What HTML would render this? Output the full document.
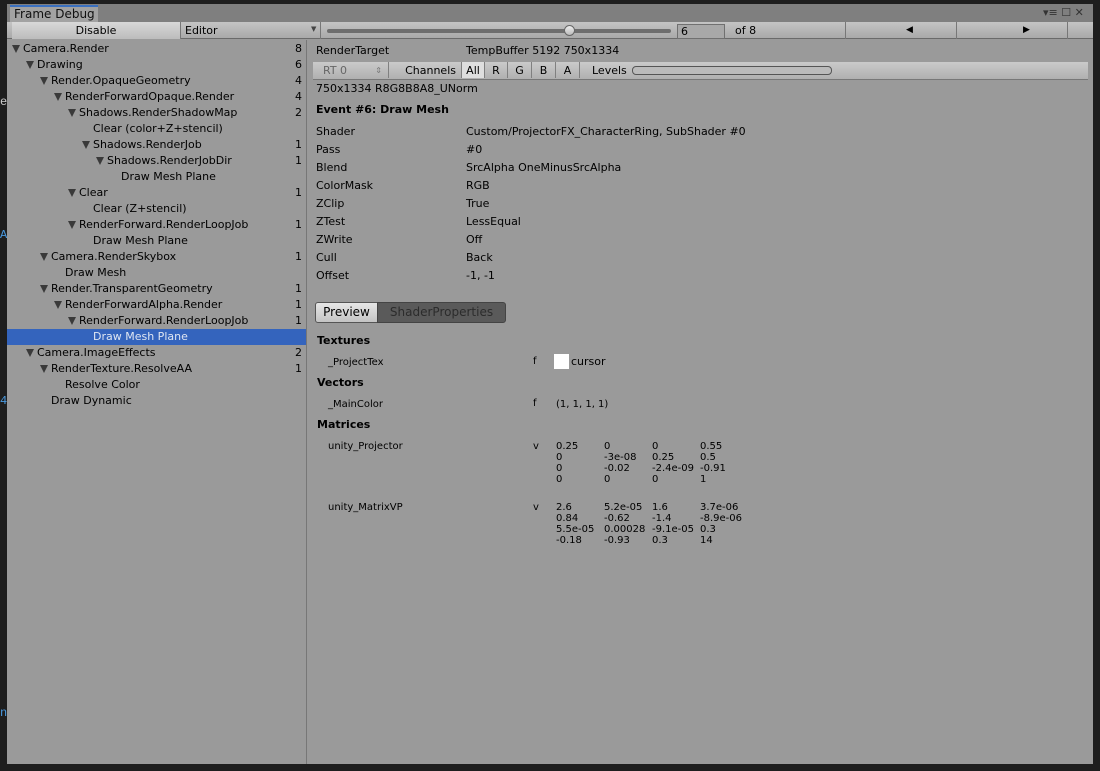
<!DOCTYPE html>
<html><head><meta charset="utf-8"><style>
*{margin:0;padding:0;box-sizing:border-box}
body{width:1100px;height:771px;background:#1e1e1e;position:relative;overflow:hidden;font-family:"DejaVu Sans","Liberation Sans",sans-serif;font-size:11px;color:#000}
.a{position:absolute;white-space:nowrap}
#win{position:absolute;left:7px;top:4px;width:1086px;height:760px;background:#9a9a9a}
.tri{position:absolute;width:0;height:0;border-left:4.5px solid transparent;border-right:4.5px solid transparent;border-top:8px solid #3a3a3a}
.row{position:absolute;left:0;width:299px;height:16px;line-height:16px}
.cnt{position:absolute;right:4px;top:0}
.btn{position:absolute;top:0;height:16px;line-height:17px;text-align:center;border-right:1px solid #808080}
.sm{font-size:10px}
</style></head><body>
<div class="a" style="left:0;top:95px;color:#ccc;font-family:'Liberation Mono';font-size:12px">e</div>
<div class="a" style="left:0;top:228px;color:#4a9ae0;font-family:'Liberation Mono';font-size:12px">A</div>
<div class="a" style="left:0;top:394px;color:#4a9ae0;font-family:'Liberation Mono';font-size:12px">4</div>
<div class="a" style="left:0;top:706px;color:#4a9ae0;font-family:'Liberation Mono';font-size:12px">n</div>

<div id="win">
 <div class="a" style="left:0;top:0;width:1086px;height:18px;background:#7f7f7f"></div>
 <div class="a" style="left:3px;top:1px;width:88px;height:18px;background:#a2a2a2;border-top:2px solid #3a70c0;padding-left:4px;line-height:15px;font-size:12px;color:#111">Frame Debug</div>
 <div class="a" style="left:1036px;top:2px;color:#333;font-size:11px">▾≡ ☐ ✕</div>
 <div class="a" style="left:0;top:18px;width:1086px;height:17px;background:linear-gradient(#c4c4c4,#a9a9a9);border-bottom:1px solid #6a6a6a"></div>
 <div class="a" style="left:5px;top:18px;width:169px;height:17px;background:linear-gradient(#d8d8d8,#bcbcbc);border-right:1px solid #777;text-align:center;line-height:17px">Disable</div>
 <div class="a" style="left:178px;top:18px;line-height:17px">Editor</div>
 <div class="a" style="left:304px;top:18px;font-size:7px;line-height:14px;color:#444">▼</div>
 <div class="a" style="left:313px;top:18px;width:1px;height:17px;background:#777"></div>
 <div class="a" style="left:320px;top:25px;width:344px;height:4px;border-radius:2px;background:#6e6e6e"></div>
 <div class="a" style="left:557px;top:21px;width:11px;height:11px;border-radius:50%;background:linear-gradient(#eee,#bbb);border:1px solid #666"></div>
 <div class="a" style="left:670px;top:20px;width:48px;height:15px;background:#a8a8a8;border:1px solid #707070;line-height:13px;padding-left:3px">6</div>
 <div class="a" style="left:728px;top:18px;line-height:17px">of 8</div>
 <div class="a" style="left:838px;top:18px;width:1px;height:17px;background:#777"></div>
 <div class="a" style="left:949px;top:18px;width:1px;height:17px;background:#777"></div>
 <div class="a" style="left:1060px;top:18px;width:1px;height:17px;background:#777"></div>
 <div class="a" style="left:899px;top:18px;line-height:17px;font-size:9px">◀</div>
 <div class="a" style="left:1016px;top:18px;line-height:17px;font-size:9px">▶</div>
 <div class="a" style="left:299px;top:36px;width:1px;height:724px;background:#777"></div>

 <div class="a" style="left:0;top:37px;width:299px">
  <div class="row" style="top:0"><div class="tri" style="left:5px;top:4px"></div><span class="a" style="left:16px">Camera.Render</span><span class="cnt">8</span></div>
  <div class="row" style="top:16px"><div class="tri" style="left:19px;top:4px"></div><span class="a" style="left:30px">Drawing</span><span class="cnt">6</span></div>
  <div class="row" style="top:32px"><div class="tri" style="left:33px;top:4px"></div><span class="a" style="left:44px">Render.OpaqueGeometry</span><span class="cnt">4</span></div>
  <div class="row" style="top:48px"><div class="tri" style="left:47px;top:4px"></div><span class="a" style="left:58px">RenderForwardOpaque.Render</span><span class="cnt">4</span></div>
  <div class="row" style="top:64px"><div class="tri" style="left:61px;top:4px"></div><span class="a" style="left:72px">Shadows.RenderShadowMap</span><span class="cnt">2</span></div>
  <div class="row" style="top:80px"><span class="a" style="left:86px">Clear (color+Z+stencil)</span></div>
  <div class="row" style="top:96px"><div class="tri" style="left:75px;top:4px"></div><span class="a" style="left:86px">Shadows.RenderJob</span><span class="cnt">1</span></div>
  <div class="row" style="top:112px"><div class="tri" style="left:89px;top:4px"></div><span class="a" style="left:100px">Shadows.RenderJobDir</span><span class="cnt">1</span></div>
  <div class="row" style="top:128px"><span class="a" style="left:114px">Draw Mesh Plane</span></div>
  <div class="row" style="top:144px"><div class="tri" style="left:61px;top:4px"></div><span class="a" style="left:72px">Clear</span><span class="cnt">1</span></div>
  <div class="row" style="top:160px"><span class="a" style="left:86px">Clear (Z+stencil)</span></div>
  <div class="row" style="top:176px"><div class="tri" style="left:61px;top:4px"></div><span class="a" style="left:72px">RenderForward.RenderLoopJob</span><span class="cnt">1</span></div>
  <div class="row" style="top:192px"><span class="a" style="left:86px">Draw Mesh Plane</span></div>
  <div class="row" style="top:208px"><div class="tri" style="left:33px;top:4px"></div><span class="a" style="left:44px">Camera.RenderSkybox</span><span class="cnt">1</span></div>
  <div class="row" style="top:224px"><span class="a" style="left:58px">Draw Mesh</span></div>
  <div class="row" style="top:240px"><div class="tri" style="left:33px;top:4px"></div><span class="a" style="left:44px">Render.TransparentGeometry</span><span class="cnt">1</span></div>
  <div class="row" style="top:256px"><div class="tri" style="left:47px;top:4px"></div><span class="a" style="left:58px">RenderForwardAlpha.Render</span><span class="cnt">1</span></div>
  <div class="row" style="top:272px"><div class="tri" style="left:61px;top:4px"></div><span class="a" style="left:72px">RenderForward.RenderLoopJob</span><span class="cnt">1</span></div>
  <div class="row" style="top:288px;background:#3464bd;color:#dfe6f2"><span class="a" style="left:86px">Draw Mesh Plane</span></div>
  <div class="row" style="top:304px"><div class="tri" style="left:19px;top:4px"></div><span class="a" style="left:30px">Camera.ImageEffects</span><span class="cnt">2</span></div>
  <div class="row" style="top:320px"><div class="tri" style="left:33px;top:4px"></div><span class="a" style="left:44px">RenderTexture.ResolveAA</span><span class="cnt">1</span></div>
  <div class="row" style="top:336px"><span class="a" style="left:58px">Resolve Color</span></div>
  <div class="row" style="top:352px"><span class="a" style="left:44px">Draw Dynamic</span></div>
 </div>

 <div class="a" style="left:309px;top:40px">RenderTarget</div>
 <div class="a" style="left:459px;top:40px">TempBuffer 5192 750x1334</div>
 <div class="a" style="left:306px;top:58px;width:775px;height:18px;background:linear-gradient(#cacaca,#b0b0b0);border-bottom:1px solid #777">
  <div class="btn" style="left:0;width:76px;color:#666;text-align:left;padding-left:10px">RT 0<span style="position:absolute;right:6px;font-size:8px;color:#777">⇕</span></div>
  <div class="btn" style="left:76px;width:73px;text-align:right;padding-right:5px">Channels</div>
  <div class="btn" style="left:149px;width:23px;background:#dedede">All</div>
  <div class="btn" style="left:172px;width:23px">R</div>
  <div class="btn" style="left:195px;width:24px">G</div>
  <div class="btn" style="left:219px;width:24px">B</div>
  <div class="btn" style="left:243px;width:24px">A</div>
  <div class="a" style="left:279px;top:0;line-height:17px">Levels</div>
  <div class="a" style="left:319px;top:4px;width:200px;height:9px;border:1px solid #555;border-radius:4px;background:#bbb"></div>
 </div>
 <div class="a" style="left:309px;top:78px">750x1334 R8G8B8A8_UNorm</div>
 <div class="a" style="left:309px;top:99px;font-weight:bold">Event #6: Draw Mesh</div>
 <div class="a" style="left:309px;top:119px;line-height:18px">Shader<br>Pass<br>Blend<br>ColorMask<br>ZClip<br>ZTest<br>ZWrite<br>Cull<br>Offset</div>
 <div class="a" style="left:459px;top:119px;line-height:18px">Custom/ProjectorFX_CharacterRing, SubShader #0<br>#0<br>SrcAlpha OneMinusSrcAlpha<br>RGB<br>True<br>LessEqual<br>Off<br>Back<br>-1, -1</div>

 <div class="a" style="left:308px;top:298px;width:63px;height:21px;border:1px solid #555;border-radius:3px 0 0 3px;background:linear-gradient(#e6e6e6,#c4c4c4);line-height:19px;text-align:center;font-size:12px">Preview</div>
 <div class="a" style="left:370px;top:298px;width:129px;height:21px;border:1px solid #444;border-radius:0 3px 3px 0;background:#5a5a5a;color:#2c2c2c;line-height:19px;text-align:center;font-size:12px">ShaderProperties</div>

 <div class="a" style="left:310px;top:330px;font-weight:bold">Textures</div>
 <div class="a sm" style="left:321px;top:353px">_ProjectTex</div>
 <div class="a sm" style="left:526px;top:352px">f</div>
 <div class="a" style="left:547px;top:350px;width:15px;height:15px;background:#fff"></div>
 <div class="a" style="left:564px;top:351px">cursor</div>
 <div class="a" style="left:310px;top:372px;font-weight:bold">Vectors</div>
 <div class="a sm" style="left:321px;top:395px">_MainColor</div>
 <div class="a sm" style="left:526px;top:394px">f</div>
 <div class="a sm" style="left:549px;top:395px">(1, 1, 1, 1)</div>
 <div class="a" style="left:310px;top:414px;font-weight:bold">Matrices</div>
 <div class="a sm" style="left:321px;top:437px">unity_Projector</div>
 <div class="a sm" style="left:526px;top:437px">v</div>
 <div class="a sm" style="left:549px;top:437px;line-height:11px">0.25<br>0<br>0<br>0</div>
 <div class="a sm" style="left:597px;top:437px;line-height:11px">0<br>-3e-08<br>-0.02<br>0</div>
 <div class="a sm" style="left:645px;top:437px;line-height:11px">0<br>0.25<br>-2.4e-09<br>0</div>
 <div class="a sm" style="left:693px;top:437px;line-height:11px">0.55<br>0.5<br>-0.91<br>1</div>
 <div class="a sm" style="left:321px;top:498px">unity_MatrixVP</div>
 <div class="a sm" style="left:526px;top:498px">v</div>
 <div class="a sm" style="left:549px;top:498px;line-height:11px">2.6<br>0.84<br>5.5e-05<br>-0.18</div>
 <div class="a sm" style="left:597px;top:498px;line-height:11px">5.2e-05<br>-0.62<br>0.00028<br>-0.93</div>
 <div class="a sm" style="left:645px;top:498px;line-height:11px">1.6<br>-1.4<br>-9.1e-05<br>0.3</div>
 <div class="a sm" style="left:693px;top:498px;line-height:11px">3.7e-06<br>-8.9e-06<br>0.3<br>14</div>
</div>
</body></html>
